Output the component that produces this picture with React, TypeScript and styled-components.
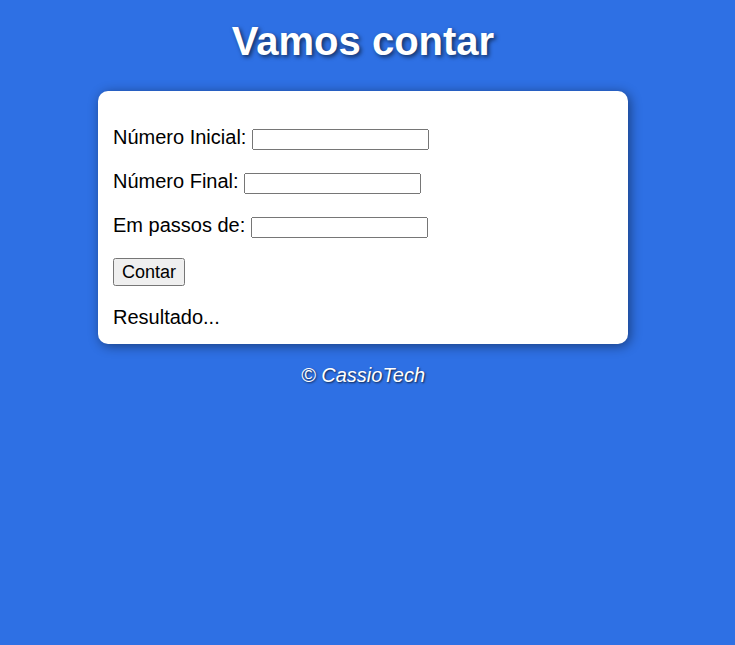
import styled, { createGlobalStyle } from "styled-components";

const GlobalStyle = createGlobalStyle`
  html, body {
    margin: 0;
    padding: 0;
    background-color: #2e70e4;
  }
  body {
    font-family: Arial, "Liberation Sans", sans-serif;
    font-size: 20px;
    min-height: 645px;
  }
`;

const Page = styled("div")`
  width: 726px;
  padding-top: 19px;
`;

const Header = styled("header")`
  h1 {
    margin: 0 0 27px;
    color: white;
    text-align: center;
    font-size: 40px;
    font-weight: bold;
    text-shadow: 2px 2px 4px rgba(0, 0, 0, 0.6);
  }
`;

const Card = styled("section")`
  width: 500px;
  margin: 0 auto;
  padding: 15px;
  background-color: white;
  border-radius: 10px;
  box-shadow: 2px 2px 12px rgba(0, 0, 0, 0.45);
  color: black;

  p {
    margin: 20px 0;
  }
  input[type="number"] {
    width: 177px;
    height: 21px;
    box-sizing: border-box;
    font-size: 13.33px;
    vertical-align: baseline;
  }
`;

const CountButton = styled("input")`
  font-family: Arial, "Liberation Sans", sans-serif;
  font-size: 18px;
  padding: 2px 7px 1px;
`;

const Result = styled("div")`
  margin: 0;
`;

const Footer = styled("footer")`
  p {
    margin: 20px 0;
    color: white;
    text-align: center;
    font-style: italic;
    text-shadow: 1px 1px 2px rgba(0, 0, 0, 0.7);
  }
`;

const Field: React.FC<{ label: string; id: string }> = ({ label, id }) => (
  <p>
    <label htmlFor={id}>{label}</label> <input type="number" id={id} />
  </p>
);

export default function App() {
  return (
    <>
      <GlobalStyle />
      <Page>
        <Header>
          <h1>Vamos contar</h1>
        </Header>
        <Card>
          <Field label="Número Inicial:" id="inicio" />
          <Field label="Número Final:" id="fim" />
          <Field label="Em passos de:" id="passo" />
          <p>
            <CountButton type="button" value="Contar" />
          </p>
          <Result>Resultado...</Result>
        </Card>
        <Footer>
          <p>&copy; CassioTech</p>
        </Footer>
      </Page>
    </>
  );
}
